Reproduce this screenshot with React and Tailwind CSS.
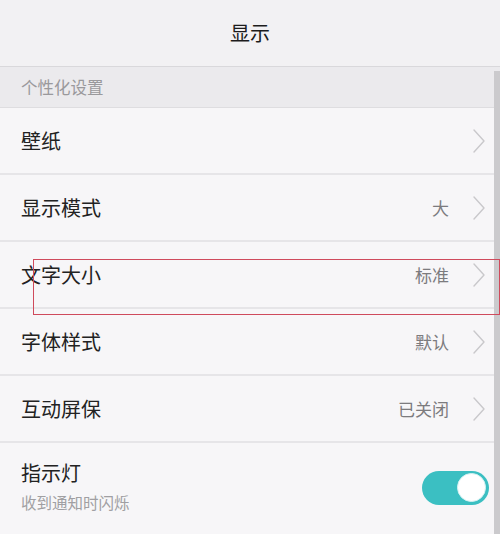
import React from 'react';

const rows = [
  { label: '壁纸', value: '' },
  { label: '显示模式', value: '大' },
  { label: '文字大小', value: '标准' },
  { label: '字体样式', value: '默认' },
  { label: '互动屏保', value: '已关闭' },
];

const Chevron = () => (
  <svg width="12" height="24" viewBox="0 0 12 24" fill="none" className="shrink-0">
    <path d="M1 1 L11 12 L1 23" stroke="#c9c8cb" strokeWidth="1.4" strokeLinejoin="round" strokeLinecap="round" />
  </svg>
);

const App = () => {
  return (
    <div
      className="relative w-[500px] h-[534px] overflow-hidden bg-[#f7f6f8]"
      style={{ fontFamily: '"Noto Sans CJK SC", "Noto Sans", sans-serif' }}
    >
      {/* Barra superior */}
      <div className="h-[67px] flex items-center justify-center bg-[#f2f1f3] border-b border-[#d9d8db]">
        <h1 className="text-[20px] text-[#1c1c1c] leading-none">显示</h1>
      </div>

      {/* Encabezado de sección */}
      <div className="h-[41px] flex items-center pl-[21px] bg-[#ebeaed] border-b border-[#dedde0]">
        <span className="text-[16.5px] text-[#9a999c] leading-none">个性化设置</span>
      </div>

      {rows.map(row => (
        <div
          key={row.label}
          className="h-[67px] flex items-center pl-[21px] pr-[15px] border-b-2 border-[#e6e5e8]"
        >
          <span className="flex-1 text-[20px] text-[#222] leading-none">{row.label}</span>
          {row.value && (
            <span className="text-[17px] text-[#7c7b7e] leading-none mr-[24px]">{row.value}</span>
          )}
          <Chevron />
        </div>
      ))}

      {/* Indicador */}
      <div className="flex items-center pl-[21px] pr-[11px] pt-[20px]">
        <div className="flex-1 flex flex-col">
          <span className="text-[20px] text-[#222] leading-none">指示灯</span>
          <span className="text-[15.5px] text-[#a09fa2] leading-none mt-[12px]">收到通知时闪烁</span>
        </div>
        <div className="w-[67px] h-[34px] rounded-full bg-[#3bbfc2] flex items-center justify-end pr-[3px] mt-[2px]">
          <div className="w-[29px] h-[29px] rounded-full bg-white border border-[#d8f2f3]" />
        </div>
      </div>

      {/* Barra de desplazamiento */}
      <div className="absolute right-0 top-[71px] w-[6px] h-[463px] bg-[#cbcacd]" />

      {/* Marco rojo */}
      <div className="absolute left-[33px] top-[259px] w-[467px] h-[56px] border border-[#cf4a5c]" />
    </div>
  );
};

export default App;
